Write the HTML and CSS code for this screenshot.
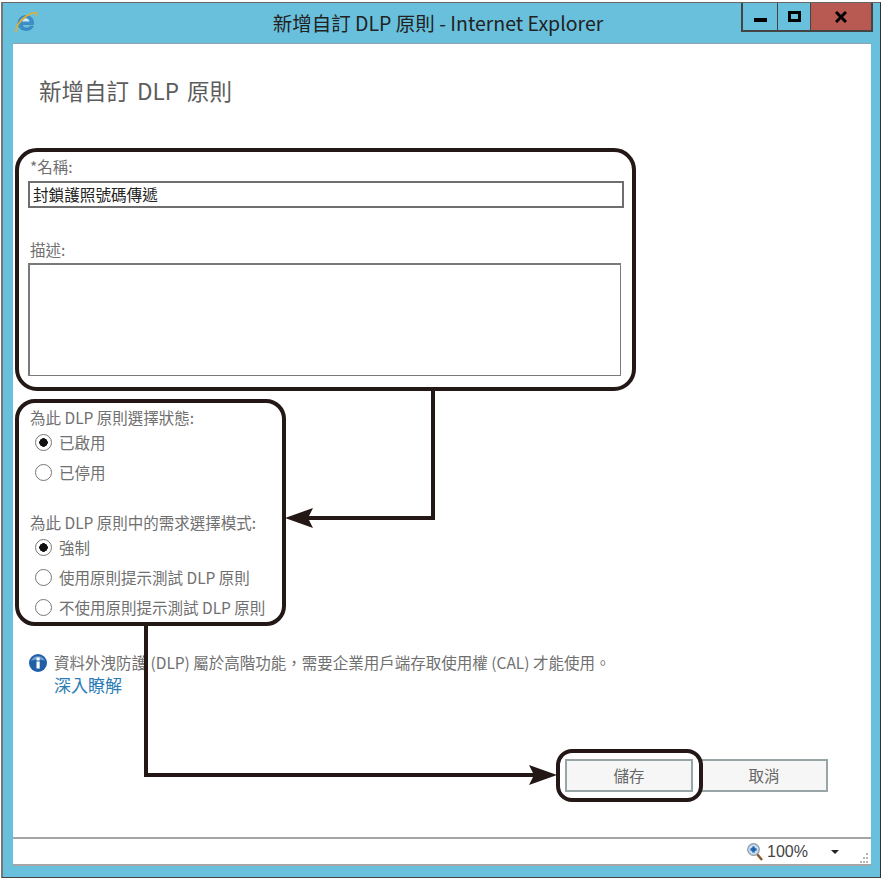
FILE: index.html
```html
<!DOCTYPE html>
<html lang="zh-Hant">
<head>
<meta charset="utf-8">
<title>新增自訂 DLP 原則 - Internet Explorer</title>
<link rel="stylesheet" href="styles.css">
</head>
<body>
<div class="window">
  <header class="titlebar">
    <svg class="ie-icon" viewBox="0 0 22 22" width="22" height="22">
      <path d="M3 12.500c0-5 3.500-8 8-8s7.500 3.200 7.500 7.500v1.500H7.200c.3 2.300 2 3.500 4.200 3.500 1.600 0 2.900-.6 3.700-1.800h3.200c-1.300 2.900-3.700 4.300-7 4.300-4.700 0-8.300-2.700-8.300-7.500z" fill="#3d8fc9" stroke="#2a6fa8" stroke-width=".5"/>
      <path d="M7.200 10.500h7.200c-.2-2-1.600-3.300-3.500-3.300-2 0-3.400 1.300-3.700 3.300z" fill="#cfe7f5"/>
      <path d="M1.500 20.800C-.5 18 4.500 9 11.500 5 15.500 2.600 19.500 .8 21 1.800c.8.600.7 2 .2 3.500" fill="none" stroke="#e3b02c" stroke-width="1.800"/>
    </svg>
    <h1 class="window-title">新增自訂 DLP 原則 - Internet Explorer</h1>
    <div class="controls">
      <div class="ctl ctl-min"><span class="glyph-min"></span></div>
      <div class="ctl ctl-max"><span class="glyph-max"></span></div>
      <div class="ctl ctl-close">
        <svg viewBox="0 0 12 12" width="12" height="12"><path d="M1 1l10 10M11 1L1 11" stroke="#000" stroke-width="3"/></svg>
      </div>
    </div>
  </header>

  <div class="client">
    <main class="page">
      <h2 class="heading">新增自訂 DLP 原則</h2>

      <label class="label">*名稱:</label>
      <div class="input">封鎖護照號碼傳遞</div>

      <label class="label label-desc">描述:</label>
      <div class="textarea"></div>

      <div class="label label-state">為此 DLP 原則選擇狀態:</div>
      <div class="radio"><span class="dot on"></span>已啟用</div>
      <div class="radio"><span class="dot"></span>已停用</div>

      <div class="label label-mode">為此 DLP 原則中的需求選擇模式:</div>
      <div class="radio"><span class="dot on"></span>強制</div>
      <div class="radio"><span class="dot"></span>使用原則提示測試 DLP 原則</div>
      <div class="radio"><span class="dot"></span>不使用原則提示測試 DLP 原則</div>

      <div class="notice">
        <svg class="info-icon" viewBox="0 0 18 18" width="18" height="18">
          <circle cx="9" cy="9" r="9" fill="#1f5fa8"/>
          <path d="M2 7a7.500 7.500 0 0 1 14 0c-4-2-10-2-14 0z" fill="#6f9fd0"/>
          <rect x="7.500" y="7.500" width="3.200" height="7" fill="#fff"/>
          <rect x="7.500" y="3.500" width="3.200" height="3" fill="#fff"/>
        </svg>
        <div class="notice-body">
          <div class="notice-text">資料外洩防護 (DLP) 屬於高階功能，需要企業用戶端存取使用權 (CAL) 才能使用。</div>
          <a class="notice-link">深入瞭解</a>
        </div>
      </div>

      <div class="actions">
        <button class="btn" type="button">儲存</button>
        <button class="btn" type="button">取消</button>
      </div>
    </main>

    <footer class="statusbar">
      <svg class="zoom-icon" viewBox="0 0 16 18" width="16" height="18">
        <path d="M10 11l5 6" stroke="#8a5a2a" stroke-width="2.500"/>
        <circle cx="6.500" cy="6.500" r="5.800" fill="#c5dcf0" stroke="#8b98a5" stroke-width="1.200"/>
        <path d="M3.500 6.500h6M6.500 3.500v6" stroke="#1d5fa8" stroke-width="2.400"/>
      </svg>
      <span class="zoom-text">100%</span>
      <span class="zoom-arrow"></span>
      <svg class="grip" viewBox="0 0 8 10" width="8" height="10">
        <path d="M6 0h2v2H6zM6 4h2v2H6zM3 4h2v2H3zM6 8h2v2H6zM3 8h2v2H3zM0 8h2v2H0z" fill="#b5b5b5"/>
      </svg>
    </footer>
  </div>
</div>

<div class="callout callout-form"></div>
<div class="callout callout-options"></div>
<div class="callout callout-save"></div>
<svg class="connectors" viewBox="0 0 883 881" width="883" height="881">
  <path d="M433 390V518H305" fill="none" stroke="#231815" stroke-width="4"/>
  <path d="M146 625V775H535" fill="none" stroke="#231815" stroke-width="4"/>
  <path d="M285 518l28-10-5 10 5 10z" fill="#231815"/>
  <path d="M557 775l-28-10 5 10-5 10z" fill="#231815"/>
</svg>
</body>
</html>
```

FILE: styles.css
```css
* { box-sizing: border-box; }
html, body { margin: 0; padding: 0; background: #fff; }
body {
  width: 883px;
  height: 881px;
  position: relative;
  overflow: hidden;
  padding: 2px 2px 0 1px;
  font-family: "Noto Sans CJK TC", "Liberation Sans", sans-serif;
  font-size: 15.500px;
  color: #666;
}

.window {
  width: 880px;
  height: 876px;
  background: #69c0dd;
  border-style: solid;
  border-color: #666 #333 #444 #777;
  border-width: 1px 1px 1px 2px;
  display: flex;
  flex-direction: column;
}

.titlebar {
  height: 40px;
  flex: none;
  display: grid;
  grid-template-columns: 1fr auto 1fr;
  align-items: start;
  padding-right: 7px;
}
.ie-icon { margin: 8px 0 0 12px; }
.window-title {
  margin: 7px 0 0;
  font-size: 19.500px;
  line-height: 26px;
  font-weight: 400;
  color: #222;
  white-space: nowrap;
}
.controls {
  justify-self: end;
  display: flex;
  height: 29px;
  border: solid #444;
  border-width: 0 2px 2px 2px;
}
.ctl {
  display: flex;
  align-items: center;
  justify-content: center;
  height: 100%;
}
.ctl-min { width: 35px; border-right: 1px solid #444; }
.ctl-max { width: 33px; border-right: 1px solid #444; }
.ctl-close { width: 60px; background: #b85a52; }
.glyph-min { display: block; width: 13px; height: 4px; background: #000; margin-top: 6px; }
.glyph-max { display: block; width: 13px; height: 11px; border: 3px solid #000; }

.client {
  flex: 1;
  margin: 0 9px 11px 10px;
  background: #fff;
  display: flex;
  flex-direction: column;
  border-top: 1px solid #8fa3ad;
}

.page {
  flex: 1;
  padding: 32px 0 0 15px;
  display: flex;
  flex-direction: column;
  align-items: flex-start;
}
.heading {
  margin: 0 0 52px 11px;
  font-size: 22.500px;
  line-height: 28px;
  font-weight: 400;
  color: #5c5c5c;
  word-spacing: 3px;
}
.label { display: block; line-height: 20px; margin-left: 2px; white-space: nowrap; color: #707070; }
.label-desc { margin-top: 31px; }
.label-state { margin-top: 31px; }
.label-mode { margin-top: 25px; }
.input {
  width: 596px;
  height: 27px;
  margin-top: 5px;
  padding-left: 3px;
  border: 2px solid #6e6e6e;
  font-size: 15.600px;
  line-height: 23px;
  color: #222;
}
.textarea {
  width: 593px;
  height: 113px;
  margin-top: 4px;
  border: 2px solid #7a7a7a;
  border-right-width: 1px;
  border-bottom-width: 1px;
}
.radio {
  height: 30px;
  display: flex;
  align-items: center;
  white-space: nowrap;
  padding-left: 7px;
  color: #707070;
}
.dot {
  width: 17px;
  height: 17px;
  margin-right: 7px;
  border: 1.500px solid #777;
  border-radius: 50%;
  flex: none;
  background: #fff;
}
.dot.on {
  background: radial-gradient(circle, #111 0, #111 4px, #fff 4.500px);
}

.notice {
  display: flex;
  align-items: flex-start;
  margin-top: 30px;
  margin-left: 1px;
}
.info-icon { margin: 2px 7px 0 0; flex: none; }
.notice-text { font-size: 15.500px; line-height: 20px; white-space: nowrap; color: #707070; }
.notice-link { display: block; margin-top: 3px; font-size: 17px; line-height: 20px; color: #2b7cb5; }

.actions {
  display: flex;
  gap: 7px;
  margin: 64px 0 0 537px;
}
.btn {
  width: 128px;
  height: 33px;
  padding: 0 0 2px;
  background: #f6f6f6;
  border: 2px solid #98a5a6;
  font-family: inherit;
  font-size: 15.500px;
  color: #666;
}

.statusbar {
  height: 29px;
  flex: none;
  display: flex;
  align-items: center;
  padding-left: 734px;
  border-top: 2px solid #a5a5a5;
  border-bottom: 2px solid #a5a5a5;
  position: relative;
}
.zoom-icon { flex: none; }
.zoom-text {
  margin-left: 4px;
  font-size: 16px;
  color: #444;
  font-family: "Liberation Sans", sans-serif;
}
.zoom-arrow {
  margin-left: 23px;
  width: 0;
  height: 0;
  border-left: 4.500px solid transparent;
  border-right: 4.500px solid transparent;
  border-top: 4px solid #222;
}
.grip { position: absolute; right: 3px; bottom: 1px; }

.callout {
  position: absolute;
  border: 4px solid #231815;
  pointer-events: none;
}
.callout-form { left: 15px; top: 148px; width: 621px; height: 243px; border-radius: 22px; }
.callout-options { left: 15px; top: 399px; width: 271px; height: 227px; border-radius: 20px; }
.callout-save { left: 556px; top: 749px; width: 147px; height: 53px; border-radius: 16px; }
.connectors { position: absolute; left: 0; top: 0; pointer-events: none; }
```
